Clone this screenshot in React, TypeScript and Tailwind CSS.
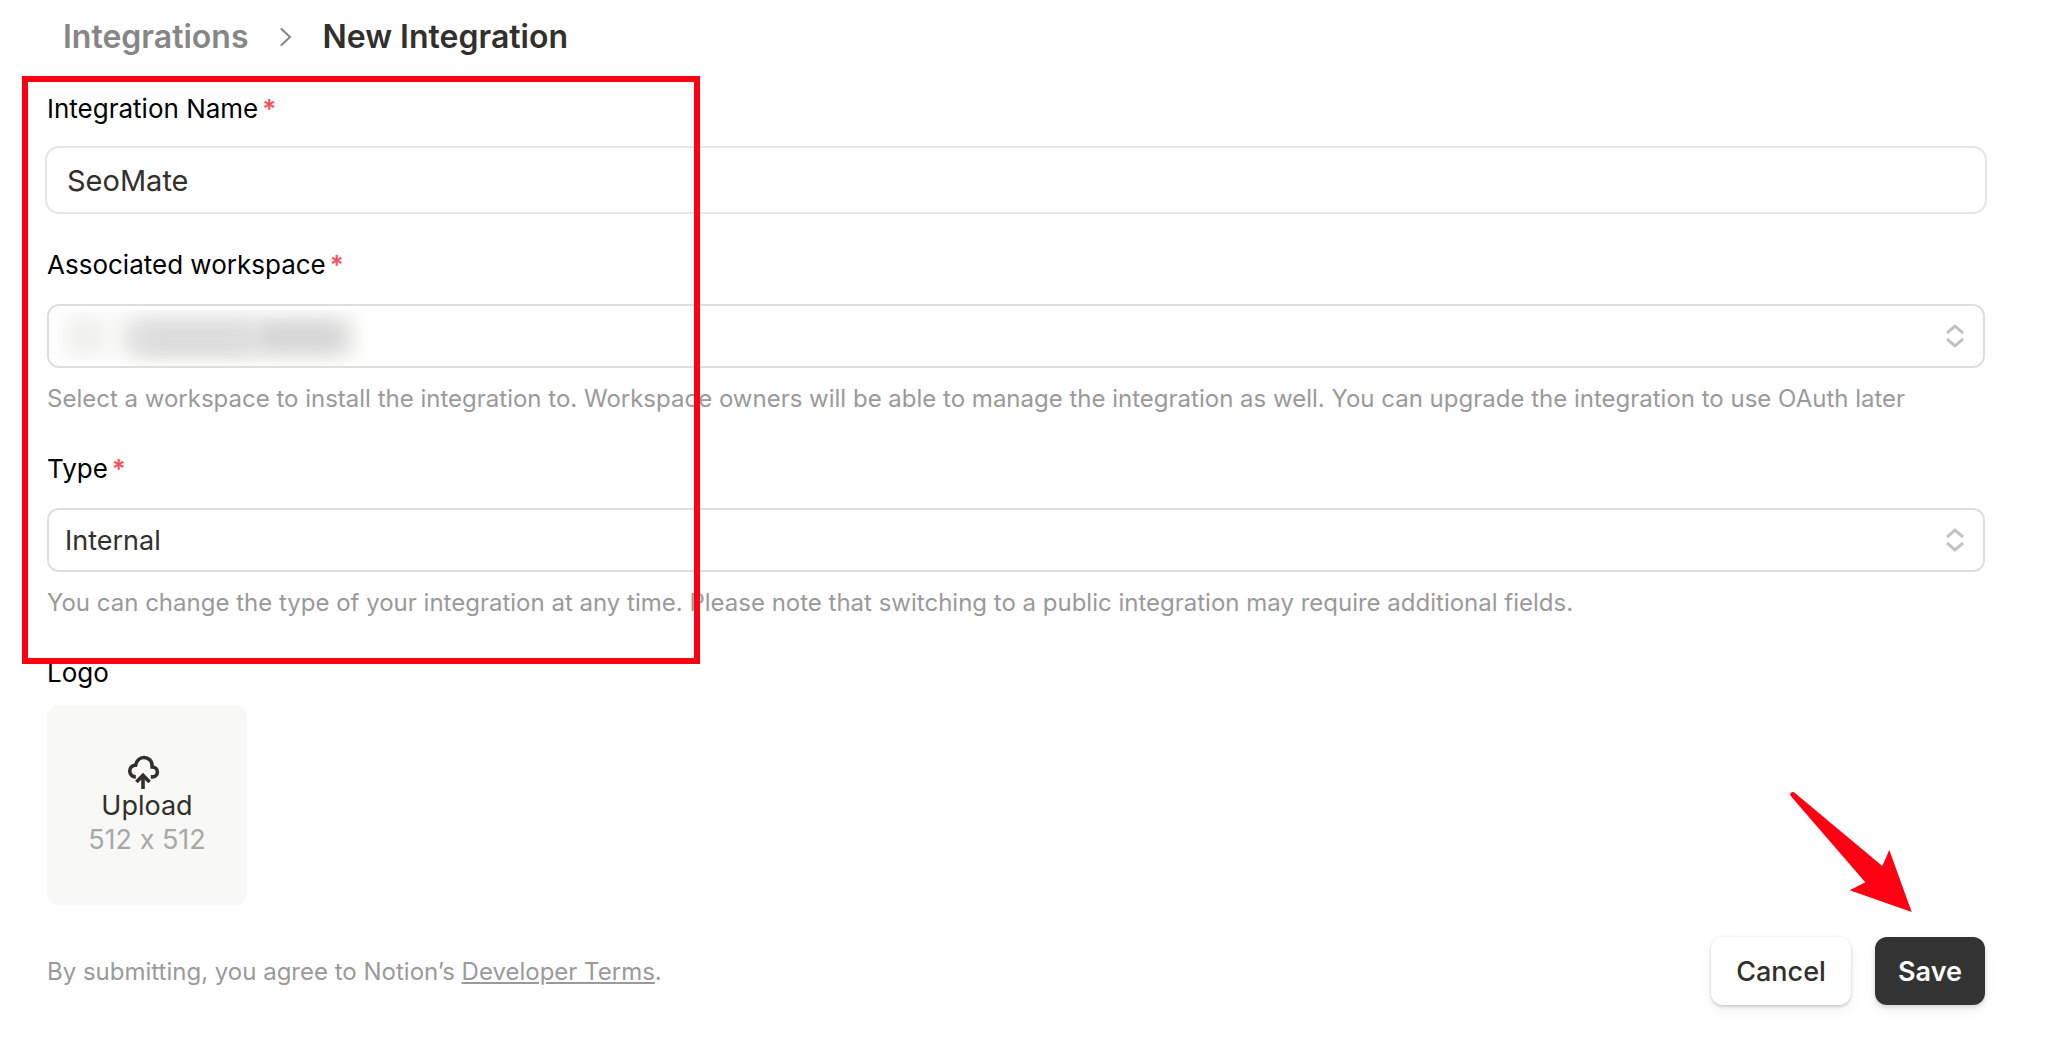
import type { ReactNode } from "react";

function FieldLabel({ htmlFor, required, children }: { htmlFor: string; required?: boolean; children: ReactNode }) {
  return (
    <label htmlFor={htmlFor} className="flex gap-1 text-[26px] leading-9 text-black">
      {children}
      {required && <span className="font-semibold text-[#f5525c]">*</span>}
    </label>
  );
}

function StepperIcon() {
  return (
    <svg
      viewBox="0 0 18 24"
      className="pointer-events-none absolute top-5 right-[21px] h-6 w-[18px]"
      fill="none"
      stroke="#c2c2c2"
      strokeWidth="3"
      aria-hidden="true"
    >
      <path d="M1 9 9 2.2 17 9" />
      <path d="M1 15 9 21.8 17 15" />
    </svg>
  );
}

function SelectBox({ id, option, children }: { id: string; option: string; children?: ReactNode }) {
  return (
    <div className="relative mt-[21px]">
      <select
        id={id}
        className="block h-16 w-full appearance-none rounded-xl border-2 border-[#dedede] bg-white px-4 pt-[2px] text-[27px] text-[#32302c]"
      >
        <option>{option}</option>
      </select>
      {children}
      <StepperIcon />
    </div>
  );
}

function HiddenName() {
  return (
    <div className="pointer-events-none absolute top-[6px] left-[7px] h-[56px] w-[330px] overflow-hidden" aria-hidden="true">
      <div className="absolute top-0 left-[6px] h-[52px] w-[300px] bg-[#f9f9f7] blur-[6px]" />
      <div className="absolute top-2 left-[14px] h-9 w-9 rounded-full bg-[#f1f1ef] blur-[6px]" />
      <div className="absolute top-[7px] left-[68px] h-10 w-[232px] rounded-full bg-[#e6e6e6] blur-[8px]" />
      <div className="absolute top-[17px] left-[84px] h-6 w-[116px] rounded-full bg-[#dadada] blur-[9px]" />
      <div className="absolute top-[15px] left-[204px] h-6 w-[84px] rounded-full bg-[#d5d5d5] blur-[8px]" />
    </div>
  );
}

function Helper({ children }: { children: ReactNode }) {
  return <p className="mt-[13px] text-2xl leading-9 text-[#9a9a9a]">{children}</p>;
}

export default function App() {
  return (
    <main className="relative bg-white pt-[17px] pr-[73px] pb-[51px] pl-[47px] font-['Inter',sans-serif] [font-feature-settings:'calt'_0]">
      <nav aria-label="Breadcrumb" className="flex items-center pl-4 text-[32px] leading-10 font-semibold">
        <a href="#integrations" className="text-[#868686]">Integrations</a>
        <svg viewBox="0 0 12 18" className="mr-[30px] ml-8 h-[18px] w-3" fill="none" stroke="#868686" strokeWidth="2" strokeLinecap="round" aria-hidden="true">
          <path d="M1.5 1 10 9 1.5 17" />
        </svg>
        <h1 className="text-[#32302c]">New Integration</h1>
      </nav>

      <form className="mt-[34px]" onSubmit={(e) => e.preventDefault()}>
        <FieldLabel htmlFor="name" required>Integration Name</FieldLabel>
        <div className="-mx-[2px] mt-[19px]">
          <input
            id="name"
            type="text"
            defaultValue="SeoMate"
            className="block h-[68px] w-full rounded-[14px] border-2 border-[#e6e6e6] bg-white px-5 text-[29px] text-[#32302c]"
          />
        </div>

        <div className="mt-[33px]">
          <FieldLabel htmlFor="workspace" required>Associated workspace</FieldLabel>
          <SelectBox id="workspace" option="">
            <HiddenName />
          </SelectBox>
          <Helper>
            Select a workspace to install the integration to. Workspace owners will be able to manage the integration as well. You can upgrade the integration to use OAuth later
          </Helper>
        </div>

        <div className="mt-[34px]">
          <FieldLabel htmlFor="type" required>Type</FieldLabel>
          <SelectBox id="type" option="Internal" />
          <Helper>
            You can change the type of your integration at any time. Please note that switching to a public integration may require additional fields.
          </Helper>
        </div>

        <div className="mt-[34px]">
          <FieldLabel htmlFor="logo">Logo</FieldLabel>
          <button
            id="logo"
            type="button"
            className="mt-[14px] flex size-[200px] flex-col items-center justify-center rounded-xl bg-[#f8f8f7] pt-[2px] text-[27px] leading-[34px] text-[#32302c]"
          >
            <svg viewBox="0 0 40 34" className="h-[34px] w-10" fill="none" stroke="#32302c" strokeWidth="3.6" aria-hidden="true">
              <path d="M8.8 21.9H8A5.9 5.9 0 0 1 7.8 10.2H8.6C9.4 5.8 12.6 2.5 17 2.5C21.6 2.5 25 6 25.1 10.6V12C28.4 12.1 30.4 14.3 30.4 17C30.4 19.9 28.2 21.9 25.4 21.9H23.8" />
              <path d="M16 34V20" />
              <path d="M9.4 27 16 20.4 22.6 27" />
            </svg>
            <span>Upload</span>
            <span className="text-[#a8a8a7]">512 x 512</span>
          </button>
        </div>

        <div className="mt-8 flex items-center justify-between">
          <p className="pt-[2px] text-2xl leading-9 text-[#9a9a9a]">
            By submitting, you agree to Notion’s{" "}
            <a href="#terms" className="underline decoration-2 underline-offset-2">Developer Terms</a>.
          </p>
          <div className="relative flex gap-6">
            <button
              type="button"
              className="h-[68px] w-[140px] rounded-xl bg-white pt-[2px] text-[27px] font-medium text-[#32302c] shadow-[0_0_2px_1px_rgba(15,15,15,0.04),0_2px_3px_rgba(15,15,15,0.14),0_6px_14px_rgba(15,15,15,0.05)]"
            >
              Cancel
            </button>
            <button
              type="submit"
              className="h-[68px] w-[110px] rounded-xl bg-[#333333] pt-[2px] text-[27px] font-semibold text-white shadow-[0_2px_4px_rgba(15,15,15,0.14),0_6px_14px_rgba(15,15,15,0.05)]"
            >
              Save
            </button>
            <svg viewBox="0 0 124 122" className="pointer-events-none absolute right-[72px] bottom-[92px] h-[122px] w-[124px]" fill="#ff0013" aria-hidden="true">
              <path d="M5 1.3Q1.5 .2 1 3.6L3 6.5 76.3 91.3 60.7 99.3 122.7 121 100.3 59 93.3 75Z" />
            </svg>
          </div>
        </div>
      </form>

      <div className="pointer-events-none absolute top-[76px] left-[22px] h-[588px] w-[678px] border-6 border-[#ff0013]" aria-hidden="true" />
    </main>
  );
}
